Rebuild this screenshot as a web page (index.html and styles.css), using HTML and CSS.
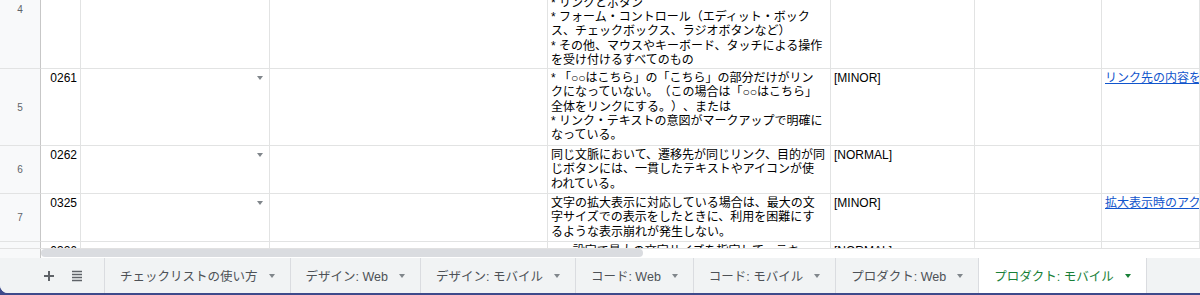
FILE: index.html
```html
<!DOCTYPE html>
<html lang="ja">
<head>
  <meta charset="UTF-8" />
  <title>チェックリスト - プロダクト: モバイル</title>
  <link rel="stylesheet" href="styles.css">
</head>
<body>
  <div class="window">

    <!-- Sheet grid (scrolled so row 4 is partly hidden) -->
    <div class="grid">
      <div class="rows">

        <div class="row r4">
          <div class="rowhead">4</div>
          <div class="cell num"></div>
          <div class="cell select"></div>
          <div class="cell"></div>
          <div class="cell bottom">* リンクとボタン<br>* フォーム・コントロール（エディット・ボック<br>ス、チェックボックス、ラジオボタンなど）<br>* その他、マウスやキーボード、タッチによる操作<br>を受け付けるすべてのもの</div>
          <div class="cell"></div>
          <div class="cell"></div>
          <div class="cell"></div>
        </div>

        <div class="row r5">
          <div class="rowhead">5</div>
          <div class="cell num">0261</div>
          <div class="cell select"><span class="caret"></span></div>
          <div class="cell"></div>
          <div class="cell">* 「○○はこちら」の「こちら」の部分だけがリン<br>クになっていない。（この場合は「○○はこちら」<br>全体をリンクにする。）、または<br>* リンク・テキストの意図がマークアップで明確に<br>なっている。</div>
          <div class="cell">[MINOR]</div>
          <div class="cell"></div>
          <div class="cell link"><a href="#">リンク先の内容を示すテキスト</a></div>
        </div>

        <div class="row r6">
          <div class="rowhead">6</div>
          <div class="cell num">0262</div>
          <div class="cell select"><span class="caret"></span></div>
          <div class="cell"></div>
          <div class="cell">同じ文脈において、遷移先が同じリンク、目的が同<br>じボタンには、一貫したテキストやアイコンが使<br>われている。</div>
          <div class="cell">[NORMAL]</div>
          <div class="cell"></div>
          <div class="cell"></div>
        </div>

        <div class="row r7">
          <div class="rowhead">7</div>
          <div class="cell num">0325</div>
          <div class="cell select"><span class="caret"></span></div>
          <div class="cell"></div>
          <div class="cell">文字の拡大表示に対応している場合は、最大の文<br>字サイズでの表示をしたときに、利用を困難にす<br>るような表示崩れが発生しない。</div>
          <div class="cell">[MINOR]</div>
          <div class="cell"></div>
          <div class="cell link"><a href="#">拡大表示時のアクセシビリティ</a></div>
        </div>

        <div class="row r8">
          <div class="rowhead">8</div>
          <div class="cell num">0326</div>
          <div class="cell select"><span class="caret"></span></div>
          <div class="cell"></div>
          <div class="cell">○○○設定で最大の文字サイズを指定して、テキ</div>
          <div class="cell">[NORMAL]</div>
          <div class="cell"></div>
          <div class="cell"></div>
        </div>

      </div>
    </div>

    <!-- Horizontal scrollbar -->
    <div class="hscroll">
      <div class="corner"></div>
      <div class="thumb"></div>
    </div>

    <!-- Sheet tabs -->
    <div class="tabbar">
      <div class="tools">
        <svg width="12" height="12" viewBox="0 0 12 12"><path d="M6 1v10M1 6h10" stroke="#5f6368" stroke-width="2" fill="none"/></svg>
        <svg width="12" height="12" viewBox="0 0 12 12"><path d="M1 1.5h10M1 4.5h10M1 7.5h10M1 10.5h10" stroke="#5f6368" stroke-width="1.5" fill="none"/></svg>
      </div>
      <div class="tab">チェックリストの使い方<span class="caret"></span></div>
      <div class="tab">デザイン: Web<span class="caret"></span></div>
      <div class="tab">デザイン: モバイル<span class="caret"></span></div>
      <div class="tab">コード: Web<span class="caret"></span></div>
      <div class="tab">コード: モバイル<span class="caret"></span></div>
      <div class="tab">プロダクト: Web<span class="caret"></span></div>
      <div class="tab active">プロダクト: モバイル<span class="caret"></span></div>
    </div>

  </div>
</body>
</html>
```

FILE: styles.css
```css
* {
  box-sizing: border-box;
}
body {
  margin: 0;
  height: 295px;
  background: #3e4a8b;
  font-family: "Liberation Sans", "Noto Sans CJK JP", sans-serif;
  text-spacing-trim: space-all;
}
.window {
  height: 293px;
  background: #fff;
  border-bottom-left-radius: 8px;
  overflow: hidden;
  display: flex;
  flex-direction: column;
}

/* grid */
.grid {
  flex: none;
  height: 248px;
  overflow: hidden;
}
.rows {
  margin-top: -50px;
}
.row {
  display: grid;
  grid-template-columns: 41px 40px 189px 278px 283px 144px 127px 1fr;
}
.r4 { height: 119px; }
.r5 { height: 77px; }
.r6 { height: 48px; }
.r7 { height: 48px; }
.r8 { height: 60px; }

.rowhead {
  display: flex;
  align-items: center;
  justify-content: center;
  background: #f8f9fa;
  border-right: 1px solid #c7c7c7;
  border-bottom: 1px solid #e2e3e3;
  font-size: 10px;
  color: #5f6368;
}
.cell {
  padding: 2px 3px;
  border-right: 1px solid #e2e3e3;
  border-bottom: 1px solid #e2e3e3;
  font-size: 12px;
  line-height: 14.25px;
  color: #000;
  white-space: nowrap;
  overflow: hidden;
}
.cell.bottom {
  display: flex;
  flex-direction: column;
  justify-content: flex-end;
  padding-bottom: 1px;
}
.num {
  text-align: right;
}
.select {
  display: flex;
  justify-content: flex-end;
  align-items: flex-start;
  padding: 7px 6px 0 0;
}
.caret {
  width: 0;
  height: 0;
  border-left: 3.5px solid transparent;
  border-right: 3.5px solid transparent;
  border-top: 4px solid #80868b;
}
.link a {
  color: #1155cc;
  text-decoration: underline;
}

/* scrollbar */
.hscroll {
  flex: none;
  height: 10px;
  display: flex;
  border-top: 1px solid #e1e1e1;
}
.hscroll .corner {
  width: 41px;
  background: #f8f9fa;
  border-right: 1px solid #c7c7c7;
}
.thumb {
  width: 602px;
  height: 8px;
  background: #dadce0;
  border-radius: 4px;
}

/* tabs */
.tabbar {
  flex: none;
  height: 35px;
  display: flex;
  background: #f1f3f4;
}
.tools {
  width: 105px;
  display: flex;
  align-items: center;
  gap: 16px;
  padding-left: 43px;
  border-right: 1px solid #dadce0;
}
.tab {
  display: flex;
  align-items: center;
  gap: 11px;
  padding: 0 15px;
  border-right: 1px solid #dadce0;
  font-size: 12.5px;
  color: #4d5156;
  white-space: nowrap;
}
.tab.active {
  background: #fff;
  color: #188038;
}
.tab.active .caret {
  border-top-color: #188038;
}
```
